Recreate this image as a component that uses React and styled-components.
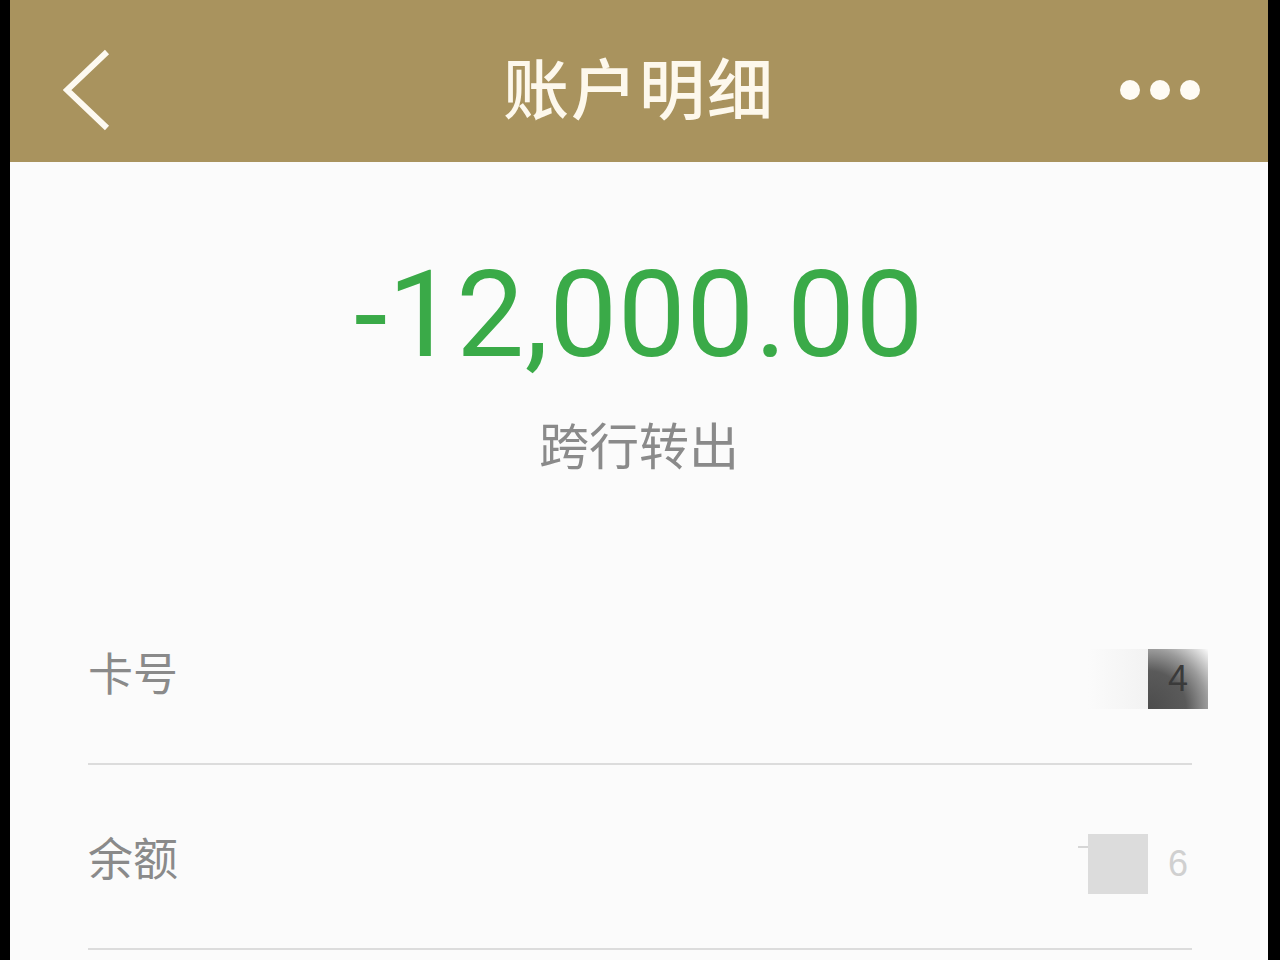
import React from "react";
import styled, { createGlobalStyle } from "styled-components";

const GlobalStyle = createGlobalStyle`
  html, body {
    margin: 0;
    padding: 0;
    background: #000;
  }
  body {
    font-family: "Noto Sans CJK SC", "Noto Sans", sans-serif;
  }
`;

const Frame = styled.div`
  margin: 0 12px 0 10px;
  min-height: 960px;
  background: #fbfbfb;
  display: flex;
  flex-direction: column;
`;

const NavBar = styled.header`
  height: 162px;
  box-sizing: border-box;
  padding: 18px 68px 0 68px;
  background: #a9935e;
  display: grid;
  grid-template-columns: 1fr auto 1fr;
  align-items: center;
`;

const BackButton = styled.button`
  justify-self: start;
  margin-left: -15px;
  border: 0;
  padding: 0;
  background: none;
  display: flex;
  color: #fdf9f0;
`;

const Title = styled.h1`
  margin: -10px 0 0;
  font-size: 66px;
  line-height: 1;
  font-weight: 500;
  letter-spacing: 2px;
  color: #fdf8ec;
`;

const MoreButton = styled.div`
  justify-self: end;
  display: flex;
  gap: 10px;
`;

const Dot = styled.span`
  width: 20px;
  height: 20px;
  border-radius: 50%;
  background: #fefbf4;
`;

const Hero = styled.section`
  display: flex;
  flex-direction: column;
  align-items: center;
  padding: 93px 0 112px;
`;

const Amount = styled.div`
  font-family: Roboto, "Liberation Sans", sans-serif;
  font-size: 121px;
  line-height: 1;
  font-weight: 400;
  letter-spacing: 0.5px;
  color: #3aaa48;
`;

const TxType = styled.div`
  margin-top: 42px;
  font-size: 50px;
  line-height: 1;
  color: #8a8a8a;
`;

const DetailList = styled.section`
  padding: 0 76px 0 78px;
`;

const Row = styled.div`
  height: 183px;
  display: flex;
  align-items: center;
  justify-content: space-between;
  border-bottom: 2px solid #dcdcdc;
`;

const Label = styled.span`
  font-size: 45px;
  line-height: 1;
  color: #8a8a8a;
`;

const Value = styled.div`
  display: flex;
  align-items: center;
  margin-right: -16px;
  margin-top: 14px;
`;

const Mask = styled.div`
  width: 60px;
  height: 60px;
  display: flex;
  align-items: center;
  justify-content: center;
  font-family: "Liberation Sans", sans-serif;
  font-size: 36px;
  background: ${(p) =>
    p.$tone === "dark"
      ? "radial-gradient(circle at 0% 100%, #4c4c4c 0%, #5a5a5a 45%, #9a9a9a 70%, #fbfbfb 100%)"
      : p.$tone === "light"
      ? "#dcdcdc"
      : p.$tone === "haze"
      ? "linear-gradient(90deg, #fbfbfb 0%, #f2f2f2 100%)"
      : "transparent"};
  color: ${(p) => (p.$tone === "dark" ? "#3a3a3a" : "#d0d0d0")};
`;

const Dash = styled.span`
  width: 10px;
  height: 2px;
  margin-top: -34px;
  background: #d6d6d6;
`;

const Chevron = () => (
  <svg width="48" height="82" viewBox="0 0 48 82" fill="none">
    <path
      d="M44 3 L4 41 L44 79"
      stroke="currentColor"
      strokeWidth="6"
      strokeLinejoin="miter"
    />
  </svg>
);

export default function App() {
  return (
    <>
      <GlobalStyle />
      <Frame>
        <NavBar>
          <BackButton aria-label="返回">
            <Chevron />
          </BackButton>
          <Title>账户明细</Title>
          <MoreButton>
            <Dot />
            <Dot />
            <Dot />
          </MoreButton>
        </NavBar>

        <Hero>
          <Amount>-12,000.00</Amount>
          <TxType>跨行转出</TxType>
        </Hero>

        <DetailList>
          <Row>
            <Label>卡号</Label>
            <Value>
              <Mask $tone="haze" />
              <Mask $tone="dark">4</Mask>
            </Value>
          </Row>
          <Row>
            <Label>余额</Label>
            <Value>
              <Dash />
              <Mask $tone="light" />
              <Mask>6</Mask>
            </Value>
          </Row>
        </DetailList>
      </Frame>
    </>
  );
}
